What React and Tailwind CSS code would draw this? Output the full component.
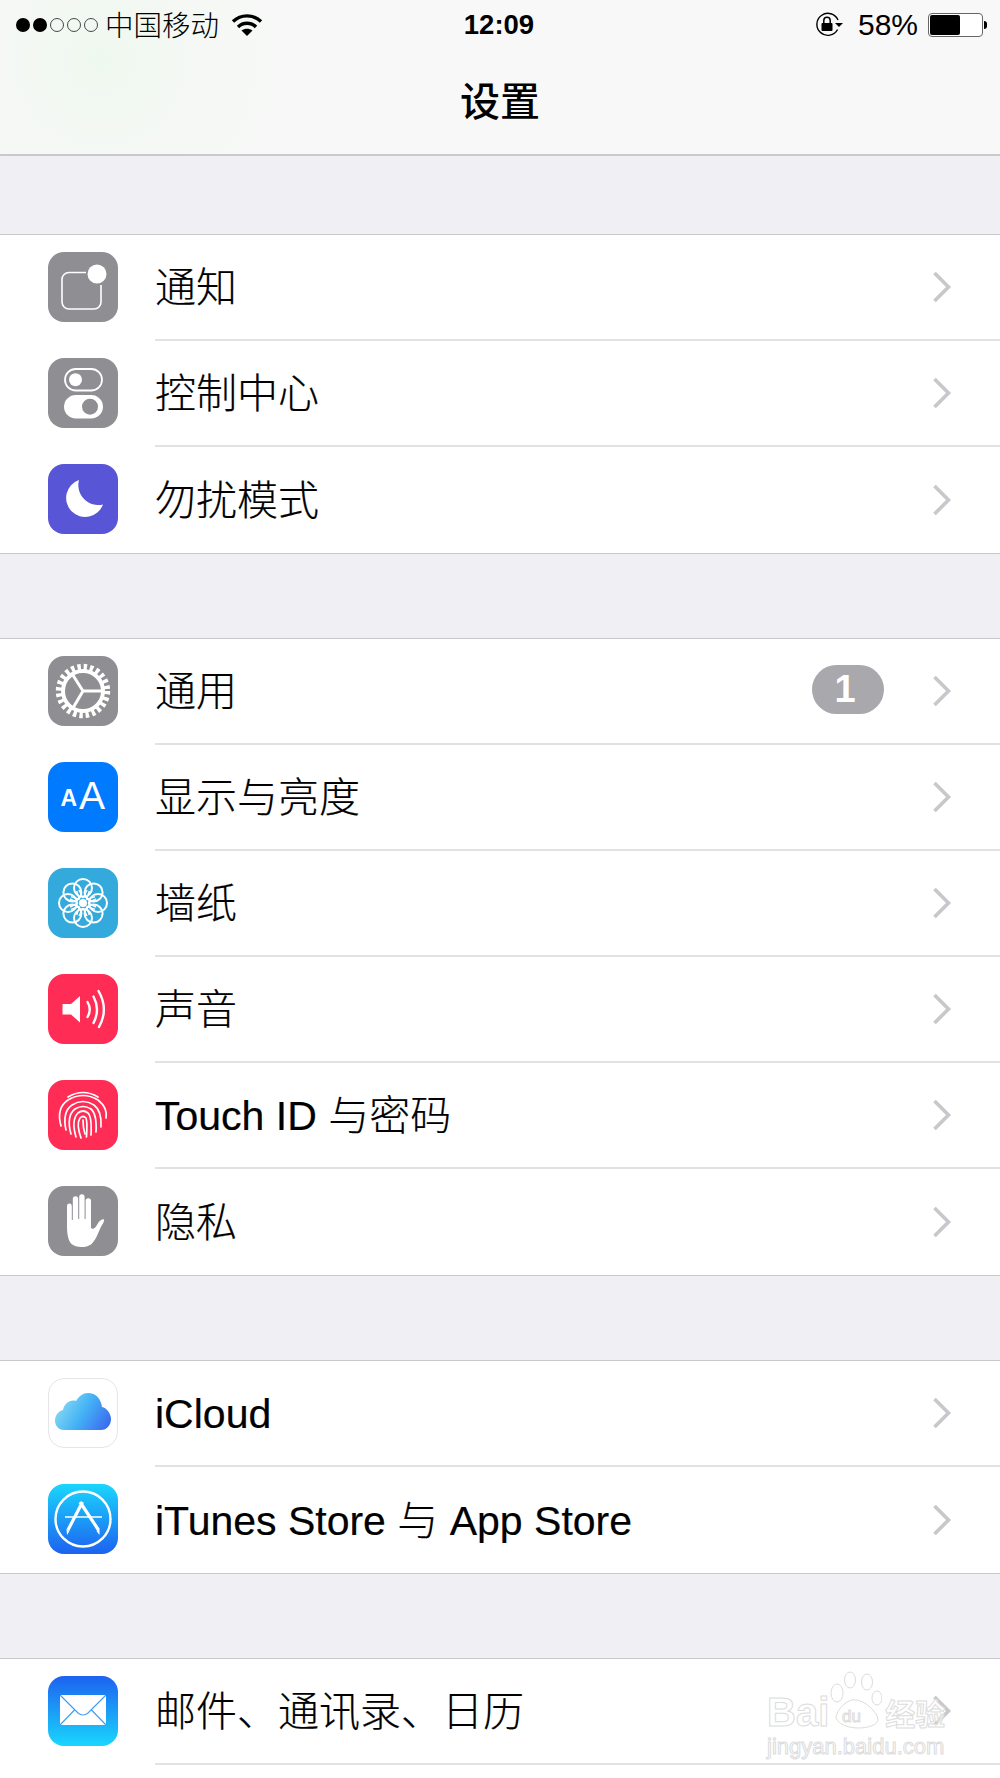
const FONT = "font-['Liberation_Sans','Noto_Sans_CJK_SC',sans-serif]";

const IconBox = ({ bg, children, bordered }) => (
    <div className={`w-[70px] h-[70px] shrink-0 rounded-[16px] overflow-hidden ${bg} ${bordered ? 'border border-[#e6e6ea]' : ''}`}>
        <svg viewBox="0 0 70 70" width="70" height="70" className="block">{children}</svg>
    </div>
);

const NotifyIcon = () => (
    <IconBox bg="bg-[#8e8e93]">
        <path d="M38 20.5H21a7 7 0 0 0-7 7V50a7 7 0 0 0 7 7h25a7 7 0 0 0 7-7V33" fill="none" stroke="#fff" strokeWidth="1.6" />
        <circle cx="49" cy="22" r="9.5" fill="#fff" />
    </IconBox>
);

const ControlIcon = () => (
    <IconBox bg="bg-[#8e8e93]">
        <rect x="17" y="11" width="37" height="21.5" rx="10.75" fill="none" stroke="#fff" strokeWidth="1.8" />
        <circle cx="27.5" cy="21.7" r="6.5" fill="#fff" />
        <rect x="16" y="37" width="39" height="23.5" rx="11.75" fill="#fff" />
        <circle cx="42" cy="48.7" r="8" fill="#8e8e93" />
    </IconBox>
);

const MoonIcon = () => (
    <IconBox bg="bg-[#5856d6]">
        <path d="M31 16A19 19 0 1 0 55 40.5A20 20 0 0 1 31 16Z" fill="#fff" />
    </IconBox>
);

const GearIcon = () => (
    <IconBox bg="bg-[#8e8e93]">
        <circle cx="35" cy="35" r="24" fill="none" stroke="#fff" strokeWidth="6.4" strokeDasharray="3.4 2.88" />
        <circle cx="35" cy="35" r="20" fill="none" stroke="#fff" strokeWidth="4" />
        <path d="M35 35H54M35 35L24.5 18.5M35 35L25 52" fill="none" stroke="#fff" strokeWidth="3" />
    </IconBox>
);

const TextSizeIcon = () => (
    <IconBox bg="bg-[#007aff]">
        <text x="12.5" y="44" fontFamily="Liberation Sans" fontSize="23" fontWeight="700" fill="#fff">A</text>
        <text x="31" y="47" fontFamily="Liberation Sans" fontSize="39" fill="#fff">A</text>
    </IconBox>
);

const FlowerIcon = () => (
    <IconBox bg="bg-[#34aadc]">
        {[0, 45, 90, 135, 180, 225, 270, 315].map((a) => (
            <g key={a} transform={`rotate(${a} 35 35)`}>
                <circle cx="35" cy="20" r="9" fill="none" stroke="#fff" strokeWidth="2" />
                <path d="M35 30L31 22M35 30L39 22" fill="none" stroke="#fff" strokeWidth="1.5" />
            </g>
        ))}
        <circle cx="35" cy="35" r="4" fill="#fff" />
    </IconBox>
);

const SoundIcon = () => (
    <IconBox bg="bg-[#ff2d55]">
        <path d="M14.5 30H23L32 22V48.5L23 40.5H14.5Z" fill="#fff" />
        <path d="M39.5 28Q44 35.5 39.5 43M45.5 22.5Q52.5 35.5 45.5 49M50.5 17Q61 35 51 53" fill="none" stroke="#fff" strokeWidth="2.4" strokeLinecap="round" />
    </IconBox>
);

const FingerIcon = () => (
    <IconBox bg="bg-[#ff2d55]">
        <g fill="none" stroke="#fff" strokeWidth="1.7" strokeLinecap="round">
            <path d="M20 17Q35 8 50 17" />
            <path d="M13 46Q8 28 20 20Q35 11 50 20Q60 28 58 38" />
            <path d="M18 50Q14 32 24 25Q35 18 46 25Q54 31 53 47" />
            <path d="M23 54Q18 36 27 29Q35 24 43 29Q49 34 48 52" />
            <path d="M28 57Q23 40 30 33Q35 29 40 33Q44 37 43 55" />
            <path d="M33 58Q28 44 32 38Q35 35 38 38Q39.5 42 38.5 57" />
            <path d="M35 40Q35 48 37 54" />
        </g>
    </IconBox>
);

const HandIcon = () => (
    <IconBox bg="bg-[#8e8e93]">
        <path d="M19 20a2.4 2.4 0 0 1 4.8 0V34h1V13a2.7 2.7 0 0 1 5.4 0V33h1V11a2.7 2.7 0 0 1 5.4 0V33h1V15a2.7 2.7 0 0 1 5.4 0V42C45 44 47.5 42 49.5 38C51 35 54 32.5 56 33.5C56.5 34 56 36 54 39C50 46 49 53 43 58.5C38 62 28 62 23.5 58C20 54 19 48 19 40Z" fill="#fff" />
    </IconBox>
);

const CloudIcon = () => (
    <IconBox bg="bg-white" bordered>
        <defs>
            <linearGradient id="cloudGrad" x1="0" y1="0.3" x2="1" y2="0.7">
                <stop offset="0" stopColor="#8fdcf3" />
                <stop offset="0.5" stopColor="#45b4f5" />
                <stop offset="1" stopColor="#3b6ef0" />
            </linearGradient>
        </defs>
        <path transform="translate(-1 -1)" d="M16 52C10 52 7 47 7 42.5C7 37 11 33 15 32C16 26 22 21 28 23C31 18 35 15 40 15C48 15 53 21 54 29C59 30 63 36 63 41C63 47 59 52 53 52Z" fill="url(#cloudGrad)" />
    </IconBox>
);

const AppStoreIcon = () => (
    <IconBox bg="bg-[linear-gradient(180deg,#1ad6fd,#1d62f0)]">
        <circle cx="35" cy="35" r="27.5" fill="none" stroke="#fff" strokeWidth="2.4" />
        <path d="M17 33H54" stroke="#fff" strokeWidth="1.6" />
        <path d="M34.5 18L20 46M32 18L50.5 46" stroke="#fff" strokeWidth="3.2" />
        <path d="M18.5 45L21.5 47L19 51ZM51.5 45L48.5 47L51.5 51Z" fill="#fff" />
    </IconBox>
);

const MailIcon = () => (
    <IconBox bg="bg-[linear-gradient(180deg,#1d62f0,#1ad6fd)]">
        <rect x="12" y="19" width="46" height="30" rx="1" fill="#fff" />
        <path d="M12 19L30 37Q35 41 40 37L58 19M12 49L26.5 34M58 49L43.5 34" fill="none" stroke="#3c9cf7" strokeWidth="1.1" />
    </IconBox>
);

const Chevron = () => (
    <svg width="20" height="32" viewBox="0 0 20 32" className="block shrink-0">
        <path d="M2.5 2L16.5 16L2.5 30" fill="none" stroke="#c7c7cc" strokeWidth="3.6" />
    </svg>
);

const Row = ({ icon, label, badge, last }) => (
    <div className="flex h-[106px] items-stretch bg-white">
        <div className="w-[155px] shrink-0 pl-[48px] pt-[17px]">{icon}</div>
        <div className={`flex-1 flex items-center pr-[48px] box-border ${last ? '' : 'border-b-2 border-[#e2e2e4]'}`}>
            <span className="text-[41px] text-black font-light [-webkit-text-stroke:0.2px_#000] leading-none flex-1 pt-[3px]">{label}</span>
            {badge && (
                <span className="w-[72px] h-[49px] -mt-[4px] rounded-full bg-[#a9a8ad] text-white font-bold text-[38px] leading-none flex items-center justify-center pr-[6px] mr-[48px]">
                    {badge}
                </span>
            )}
            <Chevron />
        </div>
    </div>
);

const Group = ({ children, className }) => (
    <div className={`border-y border-[#c8c7cc] ${className}`}>{children}</div>
);

const Wifi = () => (
    <svg width="32" height="24" viewBox="0 0 32 24" className="block">
        <path d="M2 8.5C10 1 22 1 30 8.5" fill="none" stroke="#000" strokeWidth="3.4" />
        <path d="M7 14C12 9 20 9 25 14" fill="none" stroke="#000" strokeWidth="3.4" />
        <path d="M10.5 17.5C14 15 18 15 21.5 17.5L16 23Z" fill="#000" />
    </svg>
);

const RotationLock = () => (
    <svg width="30" height="26" viewBox="0 0 30 26" className="block">
        <path d="M23.6 17.5A11 11 0 1 1 24 8" fill="none" stroke="#000" strokeWidth="1.4" />
        <path d="M21 11H29L25 15Z" fill="#000" />
        <rect x="7.5" y="11" width="11" height="8" rx="1" fill="#000" />
        <path d="M9.8 11V8.5a3.2 3.2 0 0 1 6.4 0V11" fill="none" stroke="#000" strokeWidth="1.5" />
    </svg>
);

const Battery = () => (
    <div className="flex items-center">
        <div className="w-[55px] h-[24px] rounded-[4px] border border-[#666] p-[1px] bg-white">
            <div className="w-[58%] h-full bg-black rounded-[2px]" />
        </div>
        <div className="w-[3px] h-[8px] bg-black rounded-r-full ml-[1px]" />
    </div>
);

const Dot = ({ on }) => (
    <span className={`w-[14px] h-[14px] rounded-full border border-black/70 ${on ? 'bg-black' : ''}`} />
);

const Watermark = () => (
    <div className="absolute left-[767px] top-[1668px] w-[190px] pointer-events-none text-white/60 [-webkit-text-stroke:1px_#dcdcdc]">
        <div className="flex items-end h-[62px]">
            <span className="text-[40px] font-bold leading-none -mb-[2px]">Bai</span>
            <svg width="54" height="62" viewBox="0 0 54 62" className="block shrink-0 -ml-[1px]">
                <g fill="#ffffff99" stroke="#dcdcdc" strokeWidth="1">
                    <ellipse cx="9" cy="25" rx="6" ry="9" />
                    <ellipse cx="22" cy="12" rx="5.5" ry="8" />
                    <ellipse cx="39" cy="14" rx="5.5" ry="8" />
                    <ellipse cx="49" cy="30" rx="5" ry="7" />
                    <path d="M8 50C8 42 20 30 28 32C36 32 50 44 50 52C48 62 14 64 8 50Z" />
                    <text x="14" y="54" fontFamily="Liberation Sans" fontSize="17" fontWeight="400">du</text>
                </g>
            </svg>
            <span className="text-[30px] font-bold leading-none ml-[3px] whitespace-nowrap">经验</span>
        </div>
        <div className="text-[22px] leading-none mt-[6px] whitespace-nowrap">jingyan.baidu.com</div>
    </div>
);

const App = () => {
    return (
        <div className={`relative w-[1000px] h-[1778px] overflow-hidden bg-[#efeff4] flex flex-col ${FONT}`}>
            <div className="h-[156px] shrink-0 border-b-2 border-[#c9c9cd] box-border bg-[#f8f8f8] bg-[radial-gradient(circle_at_100px_60px,#eff8ef_0,#f6f8f6_110px,#f8f8f8_240px)] text-black">
                <div className="grid grid-cols-[1fr_auto_1fr] items-center h-[50px] pl-[16px] pr-[13px]">
                    <div className="flex items-center">
                        <div className="flex gap-[3px]">
                            <Dot on />
                            <Dot on />
                            <Dot />
                            <Dot />
                            <Dot />
                        </div>
                        <span className="text-[28.5px] font-light ml-[7px] mr-[12px] leading-none pt-[3px]">中国移动</span>
                        <Wifi />
                    </div>
                    <span className="text-[27.5px] font-bold leading-none pr-[5px]">12:09</span>
                    <div className="flex items-center justify-end">
                        <RotationLock />
                        <span className="text-[30px] ml-[14px] mr-[10px] leading-none">58%</span>
                        <Battery />
                    </div>
                </div>
                <div className="text-center text-[40px] font-medium leading-none mt-[32px]">设置</div>
            </div>

            <Group className="mt-[78px]">
                <Row icon={<NotifyIcon />} label="通知" />
                <Row icon={<ControlIcon />} label="控制中心" />
                <Row icon={<MoonIcon />} label="勿扰模式" last />
            </Group>

            <Group className="mt-[84px]">
                <Row icon={<GearIcon />} label="通用" badge="1" />
                <Row icon={<TextSizeIcon />} label="显示与亮度" />
                <Row icon={<FlowerIcon />} label="墙纸" />
                <Row icon={<SoundIcon />} label="声音" />
                <Row icon={<FingerIcon />} label="Touch ID 与密码" />
                <Row icon={<HandIcon />} label="隐私" last />
            </Group>

            <Group className="mt-[84px]">
                <Row icon={<CloudIcon />} label="iCloud" />
                <Row icon={<AppStoreIcon />} label="iTunes Store 与 App Store" last />
            </Group>

            <div className="mt-[84px] border-t border-[#c8c7cc] bg-white flex-1">
                <Row icon={<MailIcon />} label="邮件、通讯录、日历" />
            </div>

            <Watermark />
        </div>
    );
};

export default App;
